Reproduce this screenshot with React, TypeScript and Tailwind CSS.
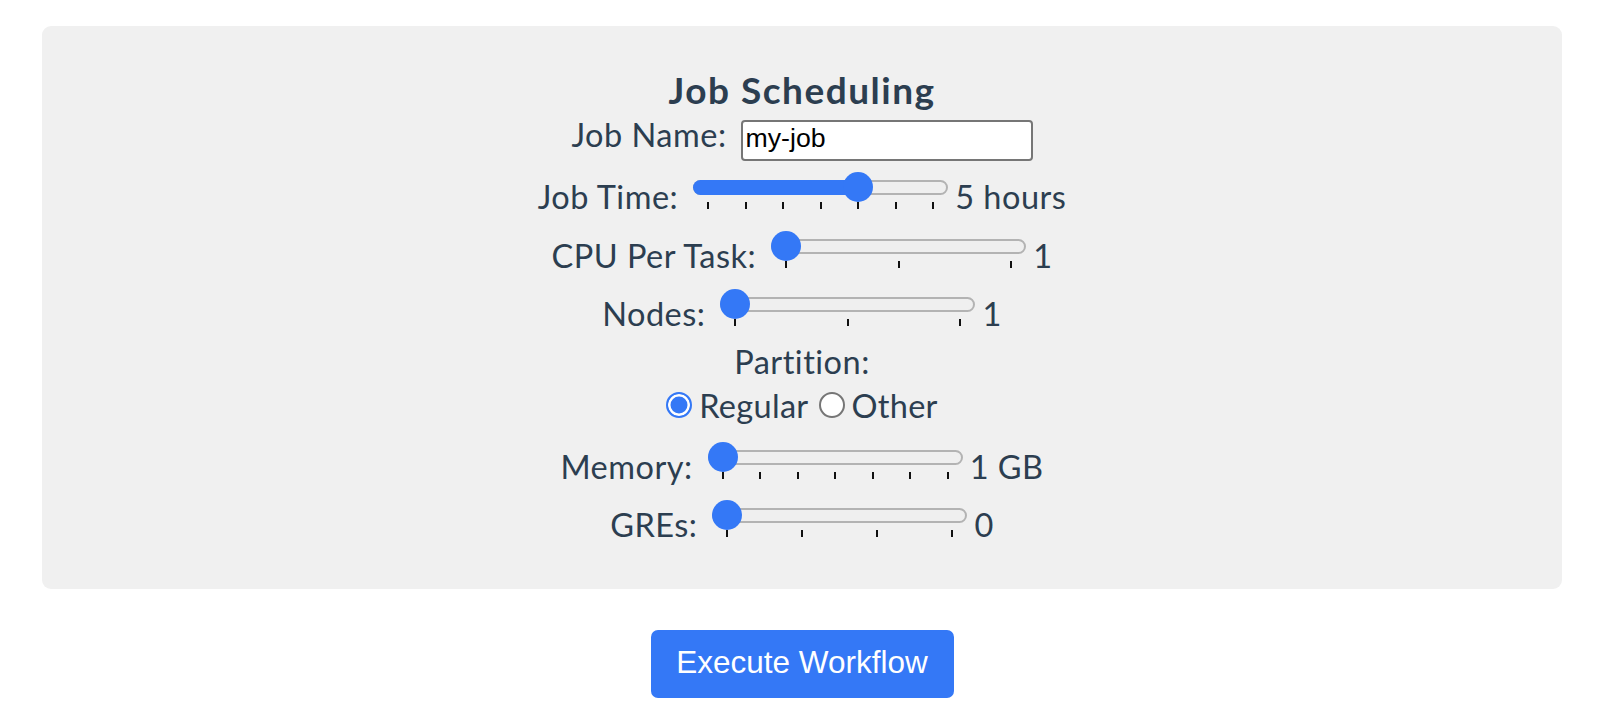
const SLIDER_W = 255;

type SliderProps = { ticks: number; value: number; filled?: boolean; className?: string };

function Slider({ ticks, value, filled = false, className = '' }: SliderProps) {
  const thumbLeft = value * (SLIDER_W - 30);
  return (
    <div className={`relative h-[37px] w-[255px] shrink-0 ${className}`}>
      {/* track */}
      <div className="absolute left-0 right-0 top-[8px] h-[15px] rounded-full border-2 border-[#b3b3b3] bg-[#efefef]" />
      {filled && (
        <div className="absolute left-0 top-[8px] h-[15px] rounded-l-full bg-[#3478f6]" style={{ width: thumbLeft + 15 }} />
      )}
      {/* thumb */}
      <div className="absolute top-0 h-[30px] w-[30px] rounded-full bg-[#3478f6]" style={{ left: thumbLeft }} />
      {/* datalist ticks */}
      <div className="absolute left-[14px] right-[14px] top-[30px] flex justify-between">
        {Array.from({ length: ticks }).map((_, i) => (
          <span key={i} className="block h-[7px] w-[2px] bg-[#111]" />
        ))}
      </div>
    </div>
  );
}

type RowProps = { label: string; ticks: number; value: number; display: string; filled?: boolean; height: string };

function SliderRow({ label, ticks, value, display, filled, height }: RowProps) {
  return (
    <div className={`flex items-baseline justify-center ${height}`}>
      <span className="leading-none">{label}</span>
      <Slider ticks={ticks} value={value} filled={filled} className="ml-[15px]" />
      <span className="ml-[7px] leading-none">{display}</span>
    </div>
  );
}

// empty boxes so the row's baseline sits on the circle's bottom edge
function Radio({ checked, className = '' }: { checked: boolean; className?: string }) {
  return checked ? (
    <div
      className={`h-[26px] w-[26px] shrink-0 rounded-full border-[2.5px] border-[#3478f6] bg-[#3478f6] shadow-[inset_0_0_0_2.5px_#ffffff] ${className}`}
    />
  ) : (
    <div className={`h-[26px] w-[26px] shrink-0 rounded-full border-2 border-[#767676] bg-white ${className}`} />
  );
}

export default function App() {
  return (
    <div className="min-h-screen bg-white pl-[42px] pr-[44px] pt-[26px] font-[family-name:Lato,sans-serif] text-[32.5px] tracking-[0.5px] text-[#2c3e50]">
      <div className="flex flex-col rounded-[9px] bg-[#f0f0f0] pb-[52px] pt-[44px]">
        {/* Title */}
        <h3 className="h-[40px] text-center text-[37px] font-bold leading-[40px] tracking-[1.5px]">Job Scheduling</h3>

        {/* Job name */}
        <div className="mt-[10px] flex h-[41px] items-start justify-center">
          <label className="leading-[30px]">Job Name:</label>
          <input
            readOnly
            defaultValue="my-job"
            className="ml-[14px] h-[41px] w-[292px] rounded-[4px] border-2 border-[#767676] bg-white pb-[7px] pl-[3px] pt-[2px] font-[family-name:'Liberation_Sans',Arial,sans-serif] text-[26.7px] tracking-normal text-black outline-none"
          />
        </div>

        <div className="mt-[11.3px]">
          <SliderRow label="Job Time:" ticks={7} value={4 / 6} display="5 hours" filled height="h-[58.5px]" />
        </div>
        <SliderRow label="CPU Per Task:" ticks={3} value={0} display="1" height="h-[58.5px]" />
        <SliderRow label="Nodes:" ticks={3} value={0} display="1" height="h-[50.3px]" />

        {/* Partition */}
        <div className="h-[44px] text-center leading-[44px]">Partition:</div>
        <div className="flex h-[58px] items-baseline justify-center tracking-[0.3px]">
          <Radio checked />
          <span className="ml-[7px] leading-[44px]">Regular</span>
          <Radio checked={false} className="ml-[10px]" />
          <span className="ml-[7px] leading-[44px]">Other</span>
        </div>

        <SliderRow label="Memory:" ticks={7} value={0} display="1 GB" height="h-[58.5px]" />
        <SliderRow label="GREs:" ticks={4} value={0} display="0" height="h-[37px]" />
      </div>

      <div className="mt-[41px] flex justify-center">
        <button className="flex h-[68px] w-[303px] items-center justify-center rounded-[7px] bg-[#3478f6] pb-[3px] font-[family-name:'Liberation_Sans',Arial,sans-serif] text-[31.5px] tracking-normal text-white">
          Execute Workflow
        </button>
      </div>
    </div>
  );
}
